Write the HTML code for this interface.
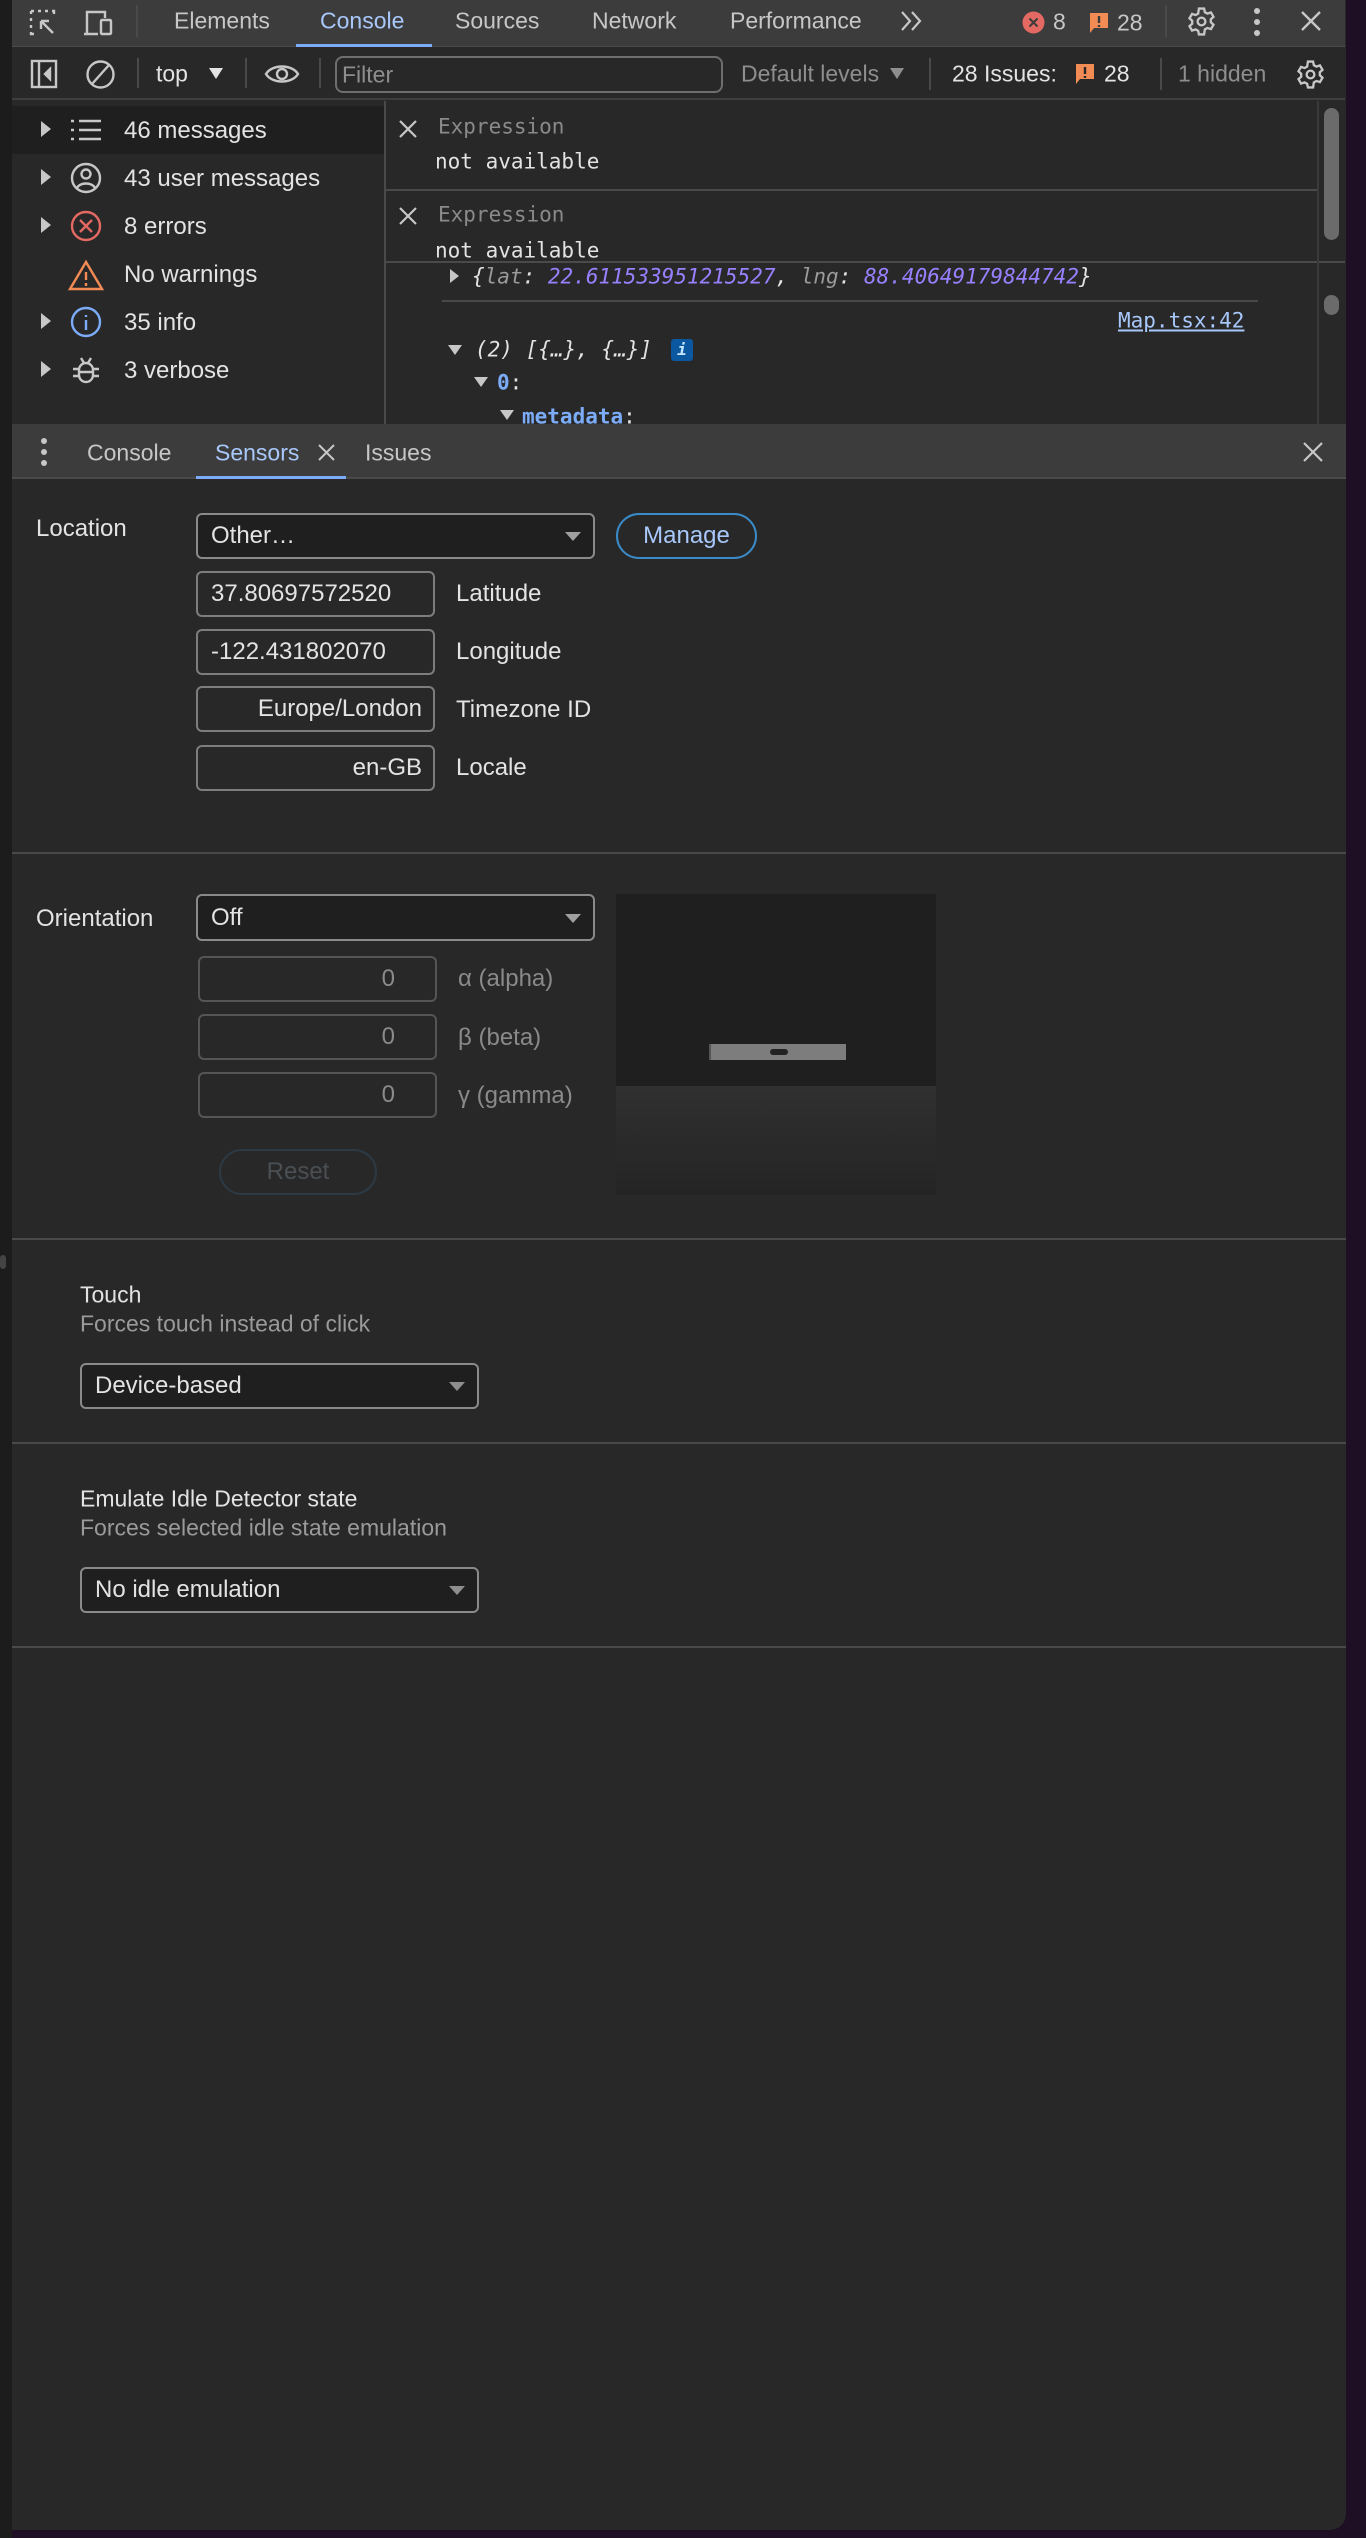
<!DOCTYPE html>
<html><head><meta charset="utf-8">
<style>
*{box-sizing:border-box;margin:0;padding:0}
body{width:1366px;height:2538px;background:#1e0f24;position:relative;overflow:hidden;font-family:"Liberation Sans",Arial,sans-serif;color:#e3e3e3}
.a{position:absolute}
.t{position:absolute;white-space:nowrap;line-height:1;transform:translateY(-50%)}
.mono{font-family:"DejaVu Sans Mono","Liberation Mono",monospace}
.sep{position:absolute;background:#4a4a4a}
.sel{position:absolute;background:#1f1f1f;border:2px solid #8a8a8a;border-radius:6px}
.sel .tx{position:absolute;left:13px;top:50%;transform:translateY(-50%);font-size:24px;color:#e3e3e3;white-space:nowrap}
.sel .ar{position:absolute;right:12px;top:50%;margin-top:-4px;width:0;height:0;border-left:8px solid transparent;border-right:8px solid transparent;border-top:9px solid #a0a0a0}
.inp{position:absolute;width:239px;height:46px;border:2px solid #7d7d7d;border-radius:6px;background:#282828;overflow:hidden;font-size:24px}
.inp span{position:absolute;top:50%;transform:translateY(-50%);white-space:nowrap}
.dis{border-color:#555}
.dis span{color:#8a8a8a;right:40px}
</style></head><body>
<div class="a" style="left:0;top:0;width:12px;height:2538px;background:#1c1c1c"></div>
<div class="a" style="left:12px;top:0;width:1334px;height:2530px;background:#282828;border-bottom-right-radius:16px;overflow:hidden"></div>

<div class="a" style="left:12px;top:0;width:1333px;height:47px;background:#3c3c3c;border-bottom:1px solid #4a4a4a"></div>
<svg class="a" style="left:28px;top:8px" width="32" height="30" viewBox="0 0 32 30" fill="none" stroke="#c7c7c7" stroke-width="2.4">
<path d="M3 3h3M10 3h3M17 3h3M24 3h2v3M3 3v3M3 10v3M3 17v3M3 24v2h3"/><path d="M13 13l12 12M13 13h8M13 13v8"/></svg>
<svg class="a" style="left:83px;top:8px" width="34" height="30" viewBox="0 0 34 30" fill="none" stroke="#c7c7c7" stroke-width="2.4"><path d="M4 26V4h18v6M1 26h14"/><rect x="18" y="12" width="10" height="14" rx="1"/></svg>
<div class="sep" style="left:136px;top:5px;width:2px;height:32px"></div>
<div class="t" style="left:174px;top:21px;font-size:23px;color:#c7c7c7">Elements</div>
<div class="t" style="left:320px;top:21px;font-size:23px;color:#a8c7fa">Console</div>
<div class="a" style="left:296px;top:44px;width:136px;height:3px;background:#7cacf8"></div>
<div class="t" style="left:455px;top:21px;font-size:23px;color:#c7c7c7">Sources</div>
<div class="t" style="left:592px;top:21px;font-size:23px;color:#c7c7c7">Network</div>
<div class="t" style="left:730px;top:21px;font-size:23px;color:#c7c7c7">Performance</div>
<svg class="a" style="left:900px;top:10px" width="24" height="22" viewBox="0 0 24 22" fill="none" stroke="#c7c7c7" stroke-width="2.2"><path d="M2 2l8 9-8 9M12 2l8 9-8 9"/></svg>
<svg class="a" style="left:1022px;top:11px" width="23" height="23" viewBox="0 0 23 23"><circle cx="11.5" cy="11.5" r="11" fill="#e46962"/><path d="M7.5 7.5l8 8M15.5 7.5l-8 8" stroke="#3c3c3c" stroke-width="2"/></svg>
<div class="t" style="left:1053px;top:22px;font-size:23px;color:#c7c7c7">8</div>
<svg class="a" style="left:1089px;top:12px" width="20" height="22" viewBox="0 0 20 22"><path d="M1 1h18v15H5l-4 5z" fill="#f28b54"/><path d="M10 4v7M10 13v2" stroke="#3c3c3c" stroke-width="2.4"/></svg>
<div class="t" style="left:1117px;top:23px;font-size:23px;color:#c7c7c7">28</div>
<div class="sep" style="left:1165px;top:5px;width:2px;height:32px"></div>
<svg class="a" style="left:1186px;top:6px" width="31" height="31" viewBox="0 0 24 24" fill="none" stroke="#c7c7c7" stroke-width="1.8"><circle cx="12" cy="12" r="3"/><path d="M10 2h4l.6 2.8 2 1.1 2.7-.9 2 3.4-2.1 1.9v2.3l2.1 1.9-2 3.4-2.7-.9-2 1.1L14 22h-4l-.6-2.8-2-1.1-2.7.9-2-3.4 2.1-1.9v-2.3L2.7 9.5l2-3.4 2.7.9 2-1.1z"/></svg>
<svg class="a" style="left:1252px;top:6px" width="10" height="32" viewBox="0 0 10 32" fill="#c7c7c7"><circle cx="5" cy="5" r="3"/><circle cx="5" cy="16" r="3"/><circle cx="5" cy="27" r="3"/></svg>
<svg class="a" style="left:1300px;top:10px" width="22" height="22" viewBox="0 0 22 22" stroke="#c7c7c7" stroke-width="2.4"><path d="M2 2l18 18M20 2L2 20"/></svg>

<div class="a" style="left:12px;top:48px;width:1333px;height:52px;background:#282828;border-bottom:2px solid #3e3e3e"></div>
<svg class="a" style="left:30px;top:59px" width="28" height="30" viewBox="0 0 28 30" fill="none" stroke="#c7c7c7" stroke-width="2.4"><rect x="2" y="2" width="24" height="26"/><path d="M9 2v26"/><path d="M20 10l-5 5 5 5z" fill="#c7c7c7"/></svg>
<svg class="a" style="left:85px;top:59px" width="31" height="31" viewBox="0 0 31 31" fill="none" stroke="#c7c7c7" stroke-width="2.4"><circle cx="15.5" cy="15.5" r="13"/><path d="M7 25L24 6"/></svg>
<div class="sep" style="left:137px;top:58px;width:2px;height:30px"></div>
<div class="t" style="left:156px;top:74px;font-size:23px;color:#e3e3e3">top</div>
<div class="a" style="left:209px;top:68px;border-left:7px solid transparent;border-right:7px solid transparent;border-top:11px solid #e3e3e3"></div>
<div class="sep" style="left:245px;top:58px;width:2px;height:30px"></div>
<svg class="a" style="left:264px;top:61px" width="36" height="26" viewBox="0 0 36 26" fill="none" stroke="#c7c7c7" stroke-width="2.4"><path d="M2 13C8 3 28 3 34 13 28 23 8 23 2 13z"/><circle cx="18" cy="13" r="5"/></svg>
<div class="sep" style="left:319px;top:58px;width:2px;height:30px"></div>
<div class="a" style="left:335px;top:56px;width:388px;height:37px;border:2px solid #6e6e6e;border-radius:8px"></div>
<div class="t" style="left:342px;top:75px;font-size:23px;color:#8e8e8e">Filter</div>
<div class="t" style="left:741px;top:74px;font-size:23px;color:#8e8e8e">Default levels</div>
<div class="a" style="left:890px;top:68px;border-left:7px solid transparent;border-right:7px solid transparent;border-top:11px solid #8e8e8e"></div>
<div class="sep" style="left:929px;top:58px;width:2px;height:32px"></div>
<div class="t" style="left:952px;top:74px;font-size:23px;color:#e3e3e3">28 Issues:</div>
<svg class="a" style="left:1075px;top:63px" width="20" height="22" viewBox="0 0 20 22"><path d="M1 1h18v15H5l-4 5z" fill="#f28b54"/><path d="M10 4v7M10 13v2" stroke="#282828" stroke-width="2.4"/></svg>
<div class="t" style="left:1104px;top:74px;font-size:23px;color:#e3e3e3">28</div>
<div class="sep" style="left:1160px;top:58px;width:2px;height:32px"></div>
<div class="t" style="left:1178px;top:74px;font-size:23px;color:#8e8e8e">1 hidden</div>
<svg class="a" style="left:1295px;top:59px" width="31" height="31" viewBox="0 0 24 24" fill="none" stroke="#c7c7c7" stroke-width="1.8"><circle cx="12" cy="12" r="3"/><path d="M10 2h4l.6 2.8 2 1.1 2.7-.9 2 3.4-2.1 1.9v2.3l2.1 1.9-2 3.4-2.7-.9-2 1.1L14 22h-4l-.6-2.8-2-1.1-2.7.9-2-3.4 2.1-1.9v-2.3L2.7 9.5l2-3.4 2.7.9 2-1.1z"/></svg>

<div class="a" style="left:12px;top:106px;width:372px;height:48px;background:#1f1f1f"></div>
<div class="sep" style="left:384px;top:101px;width:2px;height:323px"></div>
<div style="font-size:24px">
<div class="a" style="left:41px;top:121px;border-top:8px solid transparent;border-bottom:8px solid transparent;border-left:10px solid #c7c7c7"></div>
<svg class="a" style="left:71px;top:119px" width="30" height="22" viewBox="0 0 30 22" stroke="#c7c7c7" stroke-width="2.4"><path d="M0 2h3M8 2h22M0 11h3M8 11h22M0 20h3M8 20h22"/></svg>
<div class="t" style="left:124px;top:131px">46 messages</div>
<div class="a" style="left:41px;top:169px;border-top:8px solid transparent;border-bottom:8px solid transparent;border-left:10px solid #c7c7c7"></div>
<svg class="a" style="left:70px;top:162px" width="32" height="32" viewBox="0 0 32 32" fill="none" stroke="#c7c7c7" stroke-width="2.4"><circle cx="16" cy="16" r="14"/><circle cx="16" cy="12" r="4.5"/><path d="M7 26c3-6 15-6 18 0"/></svg>
<div class="t" style="left:124px;top:179px">43 user messages</div>
<div class="a" style="left:41px;top:217px;border-top:8px solid transparent;border-bottom:8px solid transparent;border-left:10px solid #c7c7c7"></div>
<svg class="a" style="left:70px;top:210px" width="32" height="32" viewBox="0 0 32 32" fill="none" stroke="#e46962" stroke-width="2.4"><circle cx="16" cy="16" r="14"/><path d="M10 10l12 12M22 10L10 22"/></svg>
<div class="t" style="left:124px;top:227px">8 errors</div>
<svg class="a" style="left:68px;top:259px" width="36" height="32" viewBox="0 0 36 32" fill="none" stroke="#f28b54" stroke-width="2.4"><path d="M18 3L2 30h32z"/><path d="M18 13v8M18 24v3"/></svg>
<div class="t" style="left:124px;top:275px">No warnings</div>
<div class="a" style="left:41px;top:313px;border-top:8px solid transparent;border-bottom:8px solid transparent;border-left:10px solid #c7c7c7"></div>
<svg class="a" style="left:70px;top:306px" width="32" height="32" viewBox="0 0 32 32" fill="none" stroke="#7cacf8" stroke-width="2.4"><circle cx="16" cy="16" r="14"/><path d="M16 14v10M16 9v2"/></svg>
<div class="t" style="left:124px;top:323px">35 info</div>
<div class="a" style="left:41px;top:361px;border-top:8px solid transparent;border-bottom:8px solid transparent;border-left:10px solid #c7c7c7"></div>
<svg class="a" style="left:72px;top:355px" width="28" height="30" viewBox="0 0 28 30" fill="none" stroke="#c7c7c7" stroke-width="2.4"><rect x="7" y="8" width="14" height="19" rx="7"/><path d="M9 3l3 5M19 3l-3 5M1 14h6M21 14h6M1 21h6M21 21h6M7 17h14"/></svg>
<div class="t" style="left:124px;top:371px">3 verbose</div>
</div>

<div class="a mono" style="left:386px;top:101px;width:931px;height:323px;font-size:21px">
<svg class="a" style="left:12px;top:18px" width="20" height="20" viewBox="0 0 20 20" stroke="#c7c7c7" stroke-width="2.2"><path d="M2 2l16 16M18 2L2 18"/></svg>
<div class="t" style="left:52px;top:26px;color:#8a8a8a">Expression</div>
<div class="t" style="left:49px;top:61px;color:#e3e3e3">not available</div>
<div class="sep" style="left:0;top:88px;width:931px;height:2px"></div>
<svg class="a" style="left:12px;top:105px" width="20" height="20" viewBox="0 0 20 20" stroke="#c7c7c7" stroke-width="2.2"><path d="M2 2l16 16M18 2L2 18"/></svg>
<div class="t" style="left:52px;top:114px;color:#8a8a8a">Expression</div>
<div class="t" style="left:49px;top:150px;color:#e3e3e3">not available</div>
<div class="sep" style="left:0;top:160px;width:959px;height:2px"></div>
<div class="a" style="left:64px;top:168px;border-top:7px solid transparent;border-bottom:7px solid transparent;border-left:9px solid #c7c7c7"></div>
<div class="t" style="left:86px;top:176px;font-style:italic;color:#e3e3e3">{<span style="color:#9a9a9a">lat</span>: <span style="color:#9980ff">22.611533951215527</span>, <span style="color:#9a9a9a">lng</span>: <span style="color:#9980ff">88.40649179844742</span>}</div>
<div class="sep" style="left:56px;top:199px;width:816px;height:2px"></div>
<div class="t" style="left:732px;top:220px;color:#a8c7fa;text-decoration:underline">Map.tsx:42</div>
<div class="a" style="left:62px;top:244px;border-left:7px solid transparent;border-right:7px solid transparent;border-top:10px solid #c7c7c7"></div>
<div class="t" style="left:89px;top:249px;font-style:italic;color:#e3e3e3">(2) [{…}, {…}]</div>
<div class="a" style="left:285px;top:238px;width:22px;height:22px;background:#0b57a0;border-radius:3px;color:#c2e7ff;font-size:16px;text-align:center;line-height:22px;font-style:italic;font-weight:bold">i</div>
<div class="a" style="left:88px;top:276px;border-left:7px solid transparent;border-right:7px solid transparent;border-top:10px solid #c7c7c7"></div>
<div class="t" style="left:111px;top:282px;color:#7cacf8;font-weight:bold">0<span style="color:#e3e3e3;font-weight:normal">:</span></div>
<div class="a" style="left:114px;top:309px;border-left:7px solid transparent;border-right:7px solid transparent;border-top:10px solid #c7c7c7"></div>
<div class="t" style="left:136px;top:316px;color:#7cacf8;font-weight:bold">metadata<span style="color:#e3e3e3;font-weight:normal">:</span></div>
</div>
<div class="a" style="left:1317px;top:101px;width:2px;height:323px;background:#3a3a3a"></div>
<div class="a" style="left:1324px;top:108px;width:15px;height:132px;background:#6b6b6b;border-radius:8px"></div>
<div class="a" style="left:1324px;top:295px;width:15px;height:20px;background:#6b6b6b;border-radius:8px"></div>

<div class="a" style="left:12px;top:424px;width:1334px;height:55px;background:#3c3c3c;border-bottom:2px solid #4a4a4a"></div>
<svg class="a" style="left:39px;top:437px" width="10" height="30" viewBox="0 0 10 30" fill="#c7c7c7"><circle cx="5" cy="4" r="3"/><circle cx="5" cy="15" r="3"/><circle cx="5" cy="26" r="3"/></svg>
<div class="t" style="left:87px;top:453px;font-size:23px;color:#c7c7c7">Console</div>
<div class="t" style="left:215px;top:453px;font-size:23px;color:#a8c7fa">Sensors</div>
<svg class="a" style="left:318px;top:444px" width="17" height="17" viewBox="0 0 17 17" stroke="#c7c7c7" stroke-width="2"><path d="M1 1l15 15M16 1L1 16"/></svg>
<div class="t" style="left:365px;top:453px;font-size:23px;color:#c7c7c7">Issues</div>
<div class="a" style="left:196px;top:476px;width:150px;height:3px;background:#7cacf8"></div>
<svg class="a" style="left:1303px;top:442px" width="20" height="20" viewBox="0 0 20 20" stroke="#c7c7c7" stroke-width="2.2"><path d="M1 1l18 18M19 1L1 19"/></svg>

<div class="t" style="left:36px;top:529px;font-size:24px">Location</div>
<div class="sel" style="left:196px;top:513px;width:399px;height:46px"><span class="tx">Other…</span><span class="ar"></span></div>
<div class="a" style="left:616px;top:513px;width:141px;height:46px;border:2px solid #3a8bc9;border-radius:24px;color:#a8c7fa;font-size:24px;text-align:center;line-height:42px">Manage</div>
<div class="inp" style="left:196px;top:571px"><span style="left:13px">37.80697572520</span></div>
<div class="t" style="left:456px;top:594px;font-size:24px">Latitude</div>
<div class="inp" style="left:196px;top:629px"><span style="left:13px">-122.431802070</span></div>
<div class="t" style="left:456px;top:652px;font-size:24px">Longitude</div>
<div class="inp" style="left:196px;top:686px"><span style="right:11px">Europe/London</span></div>
<div class="t" style="left:456px;top:710px;font-size:24px">Timezone ID</div>
<div class="inp" style="left:196px;top:745px"><span style="right:11px">en-GB</span></div>
<div class="t" style="left:456px;top:768px;font-size:24px">Locale</div>
<div class="sep" style="left:12px;top:852px;width:1334px;height:2px"></div>

<div class="t" style="left:36px;top:919px;font-size:24px">Orientation</div>
<div class="sel" style="left:196px;top:894px;width:399px;height:47px"><span class="tx">Off</span><span class="ar"></span></div>
<div class="inp dis" style="left:198px;top:956px"><span>0</span></div>
<div class="t" style="left:458px;top:979px;font-size:24px;color:#8a8a8a">α (alpha)</div>
<div class="inp dis" style="left:198px;top:1014px"><span>0</span></div>
<div class="t" style="left:458px;top:1038px;font-size:24px;color:#8a8a8a">β (beta)</div>
<div class="inp dis" style="left:198px;top:1072px"><span>0</span></div>
<div class="t" style="left:458px;top:1096px;font-size:24px;color:#8a8a8a">γ (gamma)</div>
<div class="a" style="left:219px;top:1149px;width:158px;height:46px;border:2px solid #2c3a45;border-radius:24px;color:#4a4f54;font-size:24px;text-align:center;line-height:42px">Reset</div>
<div class="a" style="left:616px;top:894px;width:320px;height:192px;background:#1f1f1f"></div>
<div class="a" style="left:616px;top:1086px;width:320px;height:109px;background:linear-gradient(#303030,#242424)"></div>
<div class="a" style="left:709px;top:1044px;width:137px;height:16px;background:#7d7d7d;border-left:2px solid #555"></div>
<div class="a" style="left:770px;top:1049px;width:18px;height:6px;background:#222;border-radius:3px"></div>
<div class="sep" style="left:12px;top:1238px;width:1334px;height:2px"></div>
<div class="a" style="left:0;top:1255px;width:6px;height:14px;background:#444;border-radius:3px"></div>

<div class="t" style="left:80px;top:1295px;font-size:23px">Touch</div>
<div class="t" style="left:80px;top:1324px;font-size:23px;color:#9a9a9a">Forces touch instead of click</div>
<div class="sel" style="left:80px;top:1363px;width:399px;height:46px"><span class="tx">Device-based</span><span class="ar" style="border-top-color:#8e8e8e"></span></div>
<div class="sep" style="left:12px;top:1442px;width:1334px;height:2px"></div>
<div class="t" style="left:80px;top:1499px;font-size:23px">Emulate Idle Detector state</div>
<div class="t" style="left:80px;top:1528px;font-size:23px;color:#9a9a9a">Forces selected idle state emulation</div>
<div class="sel" style="left:80px;top:1567px;width:399px;height:46px"><span class="tx">No idle emulation</span><span class="ar" style="border-top-color:#8e8e8e"></span></div>
<div class="sep" style="left:12px;top:1646px;width:1334px;height:2px"></div>
</body></html>
